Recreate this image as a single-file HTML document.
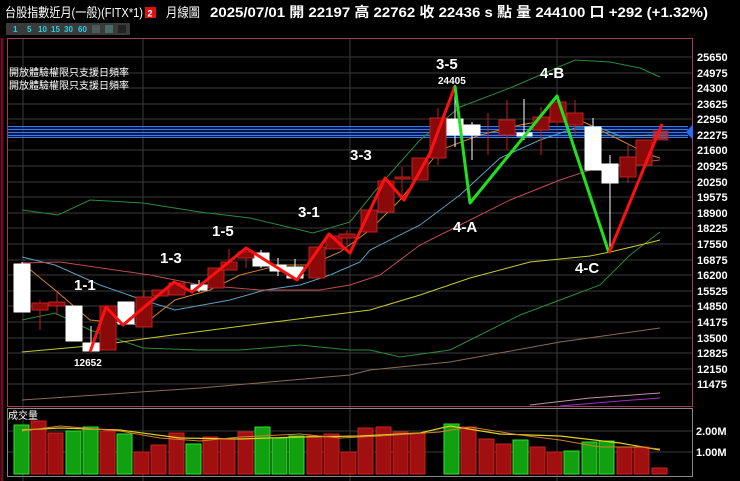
<!DOCTYPE html>
<html><head><meta charset="utf-8"><style>
html,body{margin:0;padding:0;background:#000;width:740px;height:481px;overflow:hidden}
svg{display:block}
text{font-family:"Liberation Sans","Noto Sans CJK TC",sans-serif}
</style></head><body>
<svg width="740" height="481" viewBox="0 0 740 481" xmlns="http://www.w3.org/2000/svg">
<rect width="740" height="481" fill="#000"/>
<!-- header -->
<text x="5" y="17" fill="#fff" font-size="13" textLength="138" lengthAdjust="spacingAndGlyphs">台股指數近月(一般)(FITX*1)</text>
<rect x="145" y="7" width="11" height="11" fill="#e01010"/><text x="147.5" y="16.5" fill="#fff" font-size="9" font-weight="bold">2</text>
<text x="166" y="17" fill="#fff" font-size="13" textLength="34" lengthAdjust="spacingAndGlyphs">月線圖</text>
<text x="210" y="17" fill="#fff" font-size="14" font-weight="bold" textLength="498" lengthAdjust="spacingAndGlyphs">2025/07/01  開 22197  高 22762  收 22436 s 點  量 244100 口   +292 (+1.32%)</text>
<!-- period buttons -->
<g font-size="8" font-weight="bold" fill="#2ad0e0">
<rect x="6" y="23" width="124" height="12" fill="#3a3a3a"/>
<text x="13" y="32">1</text><text x="27" y="32">5</text><text x="38" y="32">10</text><text x="51" y="32">15</text><text x="64" y="32">30</text><text x="78" y="32">60</text>
<rect x="92" y="25" width="8" height="8" fill="#4a5a5a"/><rect x="105" y="25" width="8" height="8" fill="#4a6a6a"/><rect x="118" y="25" width="8" height="8" fill="#222"/>
</g>
<line x1="2" y1="38" x2="2" y2="481" stroke="#6a1020" stroke-width="3"/>
<!-- price panel -->
<g stroke="#3a3a3a" stroke-width="1">
<line x1="8" y1="57" x2="693" y2="57"/><line x1="8" y1="73" x2="693" y2="73"/><line x1="8" y1="88" x2="693" y2="88"/><line x1="8" y1="104" x2="693" y2="104"/><line x1="8" y1="119" x2="693" y2="119"/><line x1="8" y1="135" x2="693" y2="135"/><line x1="8" y1="150" x2="693" y2="150"/><line x1="8" y1="166" x2="693" y2="166"/><line x1="8" y1="182" x2="693" y2="182"/><line x1="8" y1="197" x2="693" y2="197"/><line x1="8" y1="213" x2="693" y2="213"/><line x1="8" y1="228" x2="693" y2="228"/><line x1="8" y1="244" x2="693" y2="244"/><line x1="8" y1="260" x2="693" y2="260"/><line x1="8" y1="275" x2="693" y2="275"/><line x1="8" y1="291" x2="693" y2="291"/><line x1="8" y1="306" x2="693" y2="306"/><line x1="8" y1="322" x2="693" y2="322"/><line x1="8" y1="338" x2="693" y2="338"/><line x1="8" y1="353" x2="693" y2="353"/><line x1="8" y1="369" x2="693" y2="369"/><line x1="8" y1="384" x2="693" y2="384"/>
<line x1="23" y1="39" x2="23" y2="481"/><line x1="143" y1="39" x2="143" y2="481"/><line x1="350" y1="39" x2="350" y2="481"/><line x1="557" y1="39" x2="557" y2="481"/>
</g>
<rect x="7.5" y="38.5" width="685" height="368" fill="none" stroke="#a03860" stroke-width="1"/>
<g fill="#fff" font-size="11" font-weight="bold">
<text x="697" y="61">25650</text><text x="697" y="77">24975</text><text x="697" y="92">24300</text><text x="697" y="108">23625</text><text x="697" y="123">22950</text><text x="697" y="139">22275</text><text x="697" y="154">21600</text><text x="697" y="170">20925</text><text x="697" y="186">20250</text><text x="697" y="201">19575</text><text x="697" y="217">18900</text><text x="697" y="232">18225</text><text x="697" y="248">17550</text><text x="697" y="264">16875</text><text x="697" y="279">16200</text><text x="697" y="295">15525</text><text x="697" y="310">14850</text><text x="697" y="326">14175</text><text x="697" y="342">13500</text><text x="697" y="357">12825</text><text x="697" y="373">12150</text><text x="697" y="388">11475</text>
</g>
<text x="9" y="76" fill="#fff" font-size="10">開放體驗權限只支援日頻率</text>
<text x="9" y="89" fill="#fff" font-size="10">開放體驗權限只支援日頻率</text>
<!-- blue band -->
<rect x="8" y="126" width="680" height="12" fill="#0a2a80" opacity="0.5"/>
<g stroke="#3a7af0" stroke-width="1">
<line x1="8" y1="126.5" x2="688" y2="126.5"/><line x1="8" y1="129.5" x2="688" y2="129.5"/><line x1="8" y1="132.5" x2="688" y2="132.5"/><line x1="8" y1="135.5" x2="688" y2="135.5"/><line x1="8" y1="137.5" x2="688" y2="137.5"/>
</g>
<polygon points="686,132 693,124 693,140" fill="#2a6af0"/>
<!-- MAs -->
<g fill="none" stroke-width="1">
<polyline stroke="#2a8a3a" points="22,210 58,215 90,200 143,203 200,212 250,218 313,233 350,222 380,185 420,140 460,107 510,88 575,60 610,62 640,68 660,77"/>
<polyline stroke="#5aa0c0" points="22,257 55,265 100,285 143,300 175,310 230,300 265,290 300,285 330,275 360,262 370,250 420,225 460,195 500,158 540,140 575,128 600,128 620,136 660,135"/>
<polyline stroke="#c04a50" points="22,263 60,262 150,275 200,285 260,290 320,290 350,285 380,275 420,245 470,220 510,200 560,180 590,170 620,165 660,160"/>
<polyline stroke="#d08030" points="22,263 55,290 90,320 143,325 175,300 210,290 240,275 280,265 310,265 340,252 370,230 400,200 420,175 440,150 480,135 520,125 560,118 575,118 590,125 620,140 650,155 660,158"/>
<polyline stroke="#2a8a3a" points="22,320 55,313 90,330 143,348 200,350 240,350 300,345 350,350 370,350 400,357 450,350 480,335 520,315 560,300 600,285 630,255 660,232"/>
<polyline stroke="#c8c830" points="22,352 100,345 150,338 250,325 330,315 370,310 420,295 470,278 530,262 590,256 610,252 640,245 660,240"/>
<polyline stroke="#8a6a50" points="22,400 200,388 350,375 370,370 450,362 560,342 660,328"/>
<polyline stroke="#c090a0" points="530,405 590,398 660,393"/>
<polyline stroke="#a030c0" points="560,406 620,401 660,398"/>
</g>
<!-- candles -->
<g stroke-width="1">
<g stroke="#fff" fill="#fff">
<line x1="22" y1="262" x2="22" y2="312"/><rect x="14" y="264" width="16" height="48"/>
<rect x="66" y="306" width="16" height="35"/>
<line x1="91" y1="326" x2="91" y2="352"/><rect x="83" y="343" width="16" height="8"/>
<rect x="118" y="302" width="16" height="22"/>
<line x1="199" y1="280" x2="199" y2="292"/><rect x="191" y="285" width="16" height="5"/>
<line x1="261" y1="250" x2="261" y2="268"/><rect x="253" y="253" width="16" height="13"/>
<line x1="278" y1="258" x2="278" y2="276"/><rect x="270" y="265" width="16" height="6"/>
<line x1="295" y1="259" x2="295" y2="278"/><rect x="287" y="267" width="16" height="11"/>
<line x1="455" y1="85" x2="455" y2="147"/><rect x="447" y="119" width="16" height="16"/>
<line x1="472" y1="122" x2="472" y2="160"/><rect x="464" y="125" width="16" height="10"/>
<line x1="524" y1="99" x2="524" y2="140"/><rect x="517" y="133" width="15" height="3"/>
<line x1="593" y1="118" x2="593" y2="170"/><rect x="585" y="127" width="16" height="43"/>
<line x1="610" y1="155" x2="610" y2="253"/><rect x="602" y="164" width="16" height="19"/>
</g>
<g stroke="#c02020" fill="#8a0a0a">
<line x1="40" y1="300" x2="40" y2="330"/><rect x="32" y="303" width="16" height="7"/>
<line x1="57" y1="292" x2="57" y2="315"/><rect x="49" y="302" width="16" height="4"/>
<rect x="100" y="306" width="16" height="44"/>
<line x1="144" y1="290" x2="144" y2="327"/><rect x="136" y="297" width="16" height="30"/>
<rect x="152" y="290" width="16" height="6"/>
<rect x="169" y="283" width="16" height="12"/>
<rect x="208" y="268" width="16" height="20"/>
<line x1="229" y1="249" x2="229" y2="270"/><rect x="221" y="262" width="16" height="8"/>
<line x1="246" y1="248" x2="246" y2="268"/><rect x="238" y="252" width="16" height="6"/>
<rect x="309" y="247" width="16" height="31"/>
<rect x="326" y="236" width="16" height="13"/>
<line x1="347" y1="230" x2="347" y2="250"/><rect x="339" y="234" width="16" height="4"/>
<rect x="361" y="210" width="16" height="22"/>
<rect x="378" y="181" width="16" height="31"/>
<line x1="402" y1="167" x2="402" y2="200"/><rect x="395" y="177" width="15" height="2"/>
<rect x="412" y="158" width="16" height="22"/>
<line x1="438" y1="108" x2="438" y2="165"/><rect x="430" y="118" width="16" height="40"/>
<line x1="488" y1="113" x2="488" y2="155"/>
<line x1="507" y1="100" x2="507" y2="150"/><rect x="499" y="120" width="16" height="15"/>
<line x1="541" y1="107" x2="541" y2="155"/><rect x="533" y="117" width="16" height="13"/>
<rect x="550" y="102" width="16" height="20"/>
<line x1="575" y1="100" x2="575" y2="135"/><rect x="567" y="113" width="16" height="12"/>
<line x1="628" y1="145" x2="628" y2="183"/><rect x="620" y="157" width="16" height="20"/>
<rect x="636" y="140" width="16" height="25"/>
<rect x="653" y="131" width="15" height="9" fill="#a04050" opacity="0.8"/>
</g>
</g>
<!-- wave lines -->
<polyline fill="none" stroke="#ff1010" stroke-width="3" stroke-linejoin="round" points="90,352 106,307 123,325 174,282 192,292 246,248 297,280 329,234 350,253 385,178 404,200 430,153 455,86"/>
<polyline fill="none" stroke="#20e020" stroke-width="3" stroke-linejoin="round" points="455,86 470,203 557,96 609,253"/>
<polyline fill="none" stroke="#ff1010" stroke-width="3" points="609,253 662,124"/>
<g fill="#fff" font-weight="bold" font-size="15">
<text x="74" y="290">1-1</text><text x="160" y="263">1-3</text><text x="212" y="236">1-5</text><text x="298" y="217">3-1</text><text x="350" y="160">3-3</text><text x="436" y="69">3-5</text><text x="540" y="78">4-B</text><text x="453" y="232">4-A</text><text x="575" y="273">4-C</text>
</g>
<text x="74" y="366" fill="#fff" font-size="10" font-weight="bold">12652</text>
<text x="438" y="84" fill="#fff" font-size="10" font-weight="bold">24405</text>
<!-- volume panel -->
<rect x="7.5" y="408.5" width="685" height="68" fill="none" stroke="#888" stroke-width="1"/>
<g stroke="#3a3a3a"><line x1="8" y1="431" x2="692" y2="431"/><line x1="8" y1="452" x2="692" y2="452"/></g>
<text x="8" y="419" fill="#fff" font-size="10">成交量</text>
<text x="696" y="435" fill="#fff" font-size="11" font-weight="bold">2.00M</text>
<text x="696" y="456" fill="#fff" font-size="11" font-weight="bold">1.00M</text>
<g stroke-width="1">
<g fill="#10a010" stroke="#30e030">
<rect x="14" y="425" width="15" height="49"/><rect x="66" y="431" width="15" height="43"/><rect x="83" y="427" width="15" height="47"/><rect x="117" y="434" width="15" height="40"/><rect x="186" y="444" width="15" height="30"/><rect x="255" y="427" width="15" height="47"/><rect x="272" y="438" width="15" height="36"/><rect x="289" y="436" width="15" height="38"/><rect x="444" y="424" width="15" height="50"/><rect x="513" y="440" width="15" height="34"/><rect x="564" y="451" width="15" height="23"/><rect x="582" y="442" width="15" height="32"/><rect x="599" y="441" width="15" height="33"/>
</g>
<g fill="#a01010" stroke="#d02020">
<rect x="31" y="421" width="15" height="53"/><rect x="48" y="433" width="15" height="41"/><rect x="100" y="431" width="15" height="43"/><rect x="134" y="452" width="15" height="22"/><rect x="151" y="445" width="15" height="29"/><rect x="169" y="433" width="15" height="41"/><rect x="203" y="437" width="15" height="37"/><rect x="220" y="439" width="15" height="35"/><rect x="238" y="432" width="15" height="42"/><rect x="307" y="436" width="15" height="38"/><rect x="324" y="434" width="15" height="40"/><rect x="341" y="452" width="15" height="22"/><rect x="358" y="428" width="15" height="46"/><rect x="376" y="427" width="15" height="47"/><rect x="393" y="432" width="15" height="42"/><rect x="410" y="433" width="15" height="41"/><rect x="461" y="427" width="15" height="47"/><rect x="479" y="439" width="15" height="35"/><rect x="496" y="444" width="15" height="30"/><rect x="530" y="447" width="15" height="27"/><rect x="547" y="452" width="15" height="22"/><rect x="617" y="447" width="15" height="27"/><rect x="634" y="447" width="15" height="27"/><rect x="652" y="468" width="15" height="6"/>
</g>
</g>
<polyline fill="none" stroke="#e0d020" stroke-width="1.2" points="22,430 60,428 120,430 180,438 240,439 300,437 360,436 420,433 450,426 500,434 560,436 620,443 660,450"/>
<polyline fill="none" stroke="#d08030" stroke-width="1" points="22,431 60,426 120,431 160,438 200,441 240,437 300,434 340,438 380,436 440,432 470,427 520,435 560,440 600,447 640,447 660,449"/>
</svg>
</body></html>
